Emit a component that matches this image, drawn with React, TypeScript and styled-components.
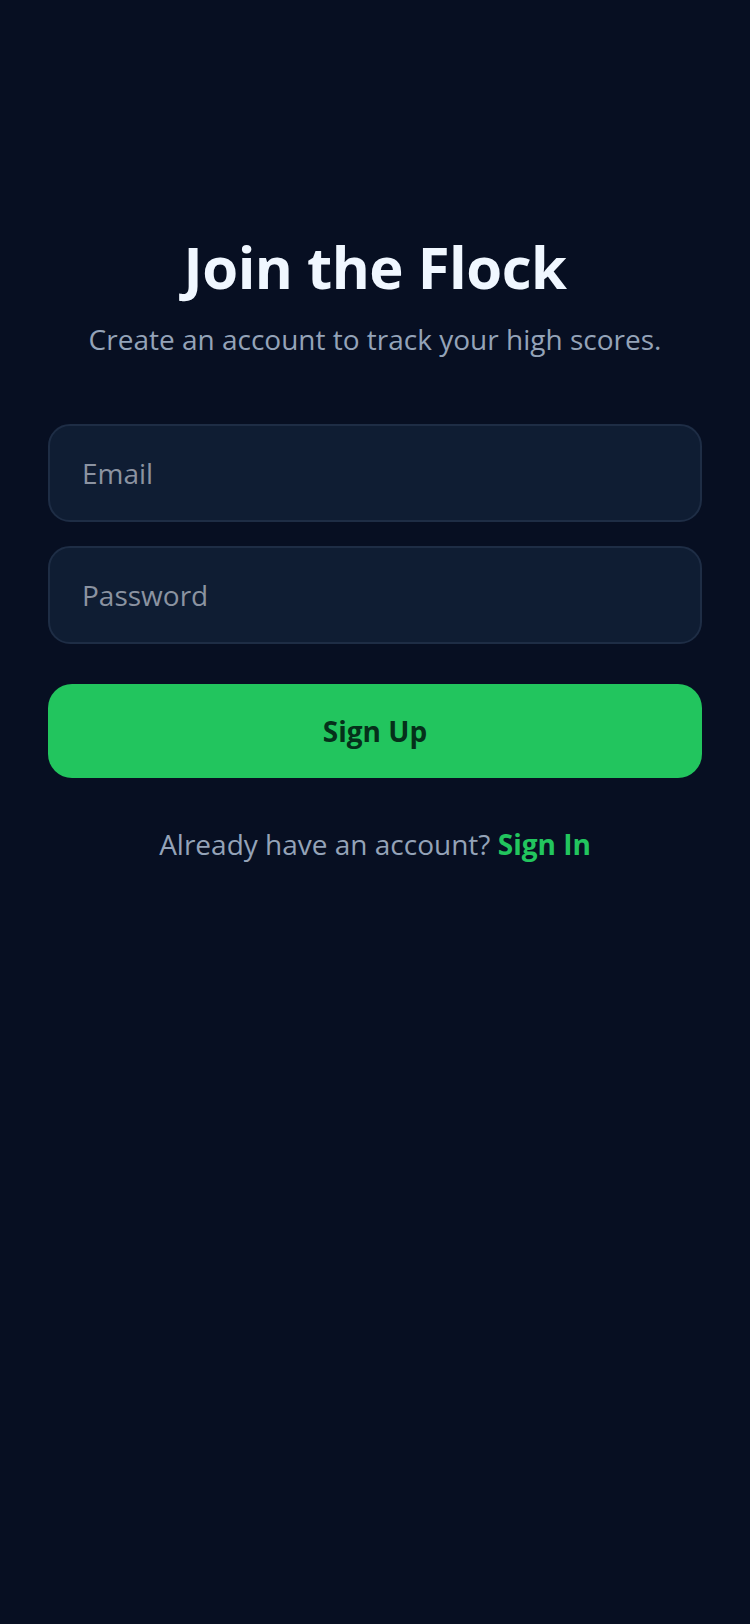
import React from 'react';
import styled, { createGlobalStyle } from 'styled-components';

const GlobalStyle = createGlobalStyle`
  html, body {
    margin: 0;
    padding: 0;
    background-color: #070f22;
  }
  * {
    box-sizing: border-box;
  }
  body {
    font-family: 'Open Sans', 'Noto Sans', sans-serif;
    min-height: 1624px;
  }
`;

const StyledPage = styled.main`
  width: 100%;
  min-height: 1624px;
  padding: 232px 48px 0;
  display: flex;
  flex-direction: column;
  background-color: #070f22;
`;

const StyledTitle = styled.h1`
  margin: 0;
  text-align: center;
  font-size: 58px;
  line-height: 1.2;
  font-weight: 700;
  letter-spacing: -0.5px;
  color: #f0f7ff;
`;

const StyledSubtitle = styled.p`
  margin: 18px 0 0;
  text-align: center;
  font-size: 28px;
  line-height: 1.4;
  color: #94a3b8;
`;

const StyledForm = styled.form`
  margin-top: 65px;
  display: flex;
  flex-direction: column;
  gap: 24px;
`;

const StyledInput = styled.input`
  width: 100%;
  height: 98px;
  padding: 0 32px;
  border: 2px solid #1e2d45;
  border-radius: 22px;
  background-color: #0f1d33;
  font-family: inherit;
  font-size: 28px;
  color: #e2e8f0;
  outline: none;

  &::placeholder {
    color: #8b93a1;
  }
`;

const StyledSubmitButton = styled.button`
  margin-top: 16px;
  width: 100%;
  height: 94px;
  border: none;
  border-radius: 24px;
  background-color: #22c55e;
  color: #05301a;
  font-family: inherit;
  font-size: 28px;
  font-weight: 700;
  cursor: pointer;
`;

const StyledFooter = styled.p`
  margin: 47px 0 0;
  text-align: center;
  font-size: 28px;
  line-height: 1.4;
  color: #94a3b8;

  a {
    color: #22c55e;
    font-weight: 700;
    text-decoration: none;
  }
`;

const App: React.FC = () => {
  return (
    <>
      <GlobalStyle />
      <StyledPage>
        <StyledTitle>Join the Flock</StyledTitle>
        <StyledSubtitle>Create an account to track your high scores.</StyledSubtitle>
        <StyledForm onSubmit={(e) => e.preventDefault()}>
          <StyledInput type="email" placeholder="Email" />
          <StyledInput type="password" placeholder="Password" />
          <StyledSubmitButton type="submit">Sign Up</StyledSubmitButton>
        </StyledForm>
        <StyledFooter>
          Already have an account? <a href="#">Sign In</a>
        </StyledFooter>
      </StyledPage>
    </>
  );
};

export default App;
